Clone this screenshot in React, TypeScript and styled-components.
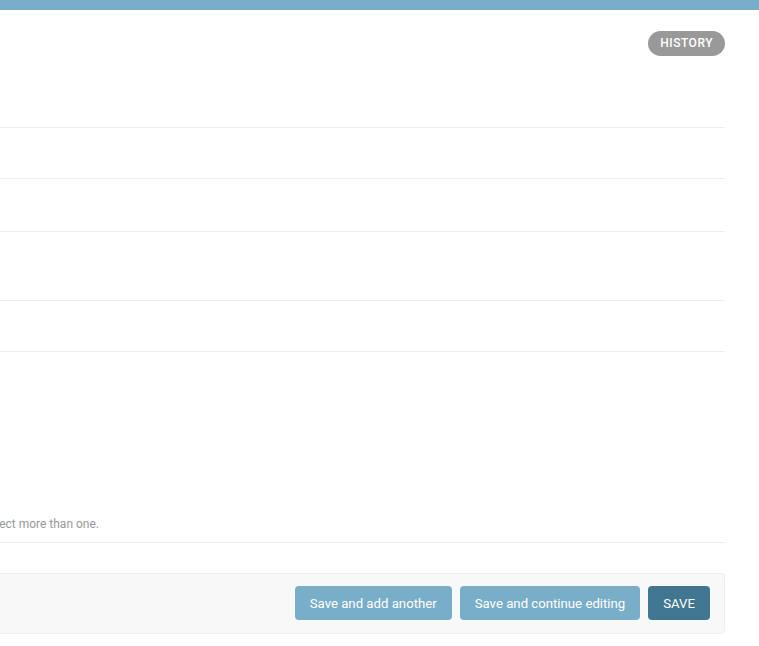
import React from "react";
import styled, { createGlobalStyle } from "styled-components";

const Global = createGlobalStyle`
  html, body { margin: 0; padding: 0; background: #fff; }
  body { font-family: Roboto, "Liberation Sans", Arial, sans-serif; color: #333; overflow: hidden; }
  * { box-sizing: border-box; }
`;

const Header = styled.div`
  height: 10px;
  background: #79aec8;
`;

const Content = styled.div`
  padding: 0 34px 0 0;
`;

const ObjectTools = styled.div`
  display: flex;
  justify-content: flex-end;
  margin-top: 21px;
  height: 25px;
`;

const HistoryLink = styled.a`
  display: inline-block;
  height: 25px;
  line-height: 25px;
  padding: 0 12px;
  border-radius: 15px;
  background: #999;
  color: #fff;
  font-size: 12px;
  font-weight: 500;
  letter-spacing: 0.5px;
  text-transform: uppercase;
  text-decoration: none;
`;

const FormRow = styled.div<{ $h: number }>`
  height: ${(p) => p.$h}px;
  border-bottom: 1px solid #eee;
  display: flex;
  align-items: flex-end;
`;

const HelpWrap = styled.div`
  width: 99px;
  display: flex;
  justify-content: flex-end;
  padding-bottom: 10px;
`;

const Help = styled.p`
  margin: 0;
  white-space: nowrap;
  font-size: 12px;
  line-height: 16px;
  color: #999;
  flex-shrink: 0;
`;

const SubmitRow = styled.div`
  margin-top: 30px;
  height: 61px;
  padding: 12px 14px 13px;
  background: #f8f8f8;
  border: 1px solid #eee;
  border-left: none;
  border-radius: 0 4px 4px 0;
  display: flex;
  justify-content: flex-end;
  gap: 8px;
`;

const Button = styled.button<{ $primary?: boolean }>`
  height: 34px;
  padding: 0 15px;
  border: none;
  border-radius: 4px;
  background: ${(p) => (p.$primary ? "#417690" : "#79aec8")};
  color: #fff;
  font-family: Roboto, "Liberation Sans", Arial, sans-serif;
  font-size: 13.2px;
  font-weight: 400;
  cursor: pointer;
`;

export default function App() {
  return (
    <>
      <Global />
      <Header />
      <Content>
        <ObjectTools>
          <HistoryLink href="#">History</HistoryLink>
        </ObjectTools>
        <FormRow $h={72} />
        <FormRow $h={51} />
        <FormRow $h={53} />
        <FormRow $h={69} />
        <FormRow $h={51} />
        <FormRow $h={191}>
          <HelpWrap>
            <Help>
              Hold down “Control”, or “Command” on a Mac, to select more than one.
            </Help>
          </HelpWrap>
        </FormRow>
        <SubmitRow>
          <Button>Save and add another</Button>
          <Button>Save and continue editing</Button>
          <Button $primary>SAVE</Button>
        </SubmitRow>
      </Content>
    </>
  );
}
